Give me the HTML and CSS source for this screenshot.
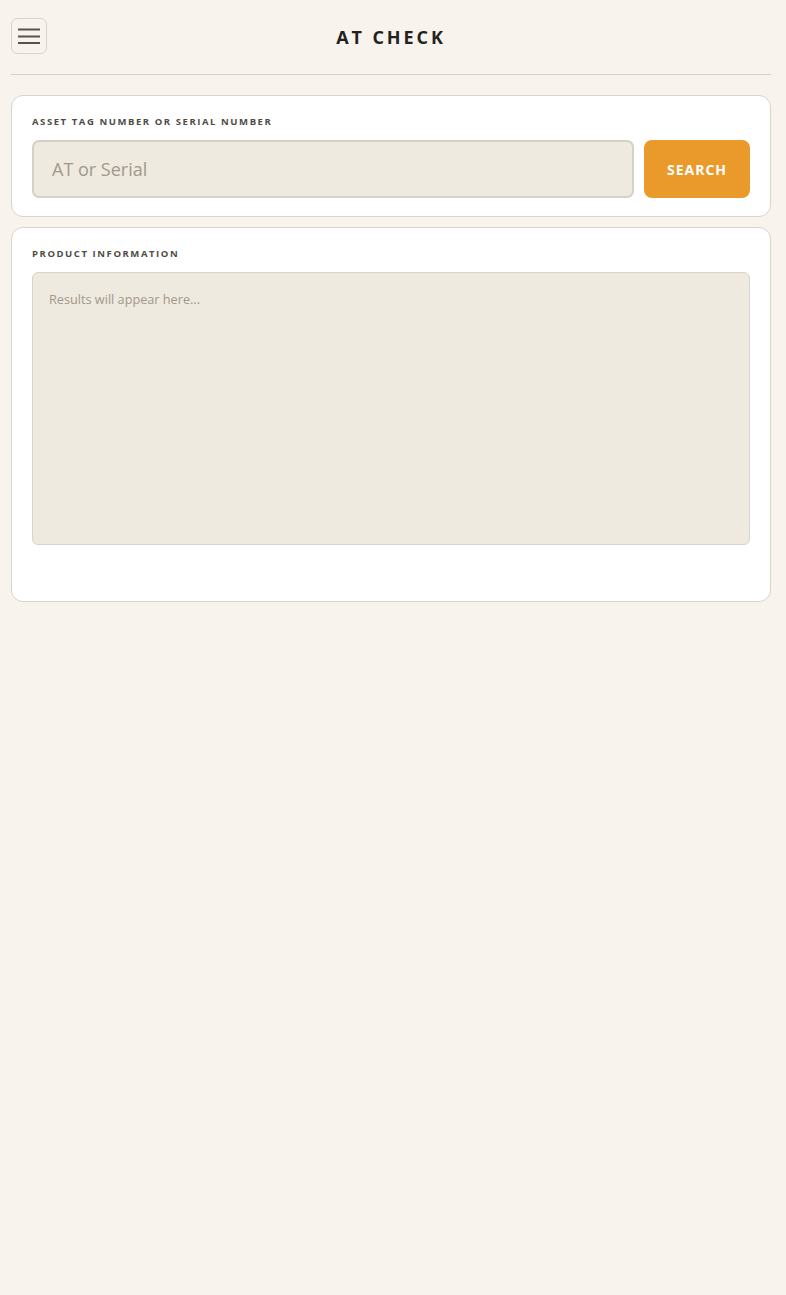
FILE: index.html
```html
<!DOCTYPE html>
<html lang="en">
<head>
<meta charset="utf-8">
<title>AT Check</title>
<link rel="stylesheet" href="styles.css">
</head>
<body>
<div class="page">
  <header class="header">
    <button class="menu-btn" aria-label="Menu">
      <svg width="22" height="16" viewBox="0 0 22 16"><path d="M0 1.5H22M0 8.5H22M0 15H22" stroke="#57534c" stroke-width="2"/></svg>
    </button>
    <h1 class="title">AT CHECK</h1>
    <span class="spacer"></span>
  </header>
  <section class="card">
    <div class="label">ASSET TAG NUMBER OR SERIAL NUMBER</div>
    <div class="search-row">
      <input class="input" type="text" placeholder="AT or Serial">
      <button class="search-btn">SEARCH</button>
    </div>
  </section>
  <section class="card card-info">
    <div class="label">PRODUCT INFORMATION</div>
    <div class="results">Results will appear here...</div>
  </section>
</div>
</body>
</html>
```
FILE: styles.css
```css
html, body { margin: 0; padding: 0; }
body {
  background: #f8f4ed;
  font-family: "Open Sans", "Noto Sans", sans-serif;
  color: #2a2824;
}
.page { padding: 18px 15px 0 11px; }
.header {
  display: flex;
  align-items: center;
  justify-content: space-between;
  padding-bottom: 20px;
  border-bottom: 1px solid #d9d1c2;
}
.menu-btn {
  width: 36px; height: 36px;
  box-sizing: border-box;
  border: 1px solid #dbd4c5;
  border-radius: 6px;
  background: #f8f4ed;
  display: flex; align-items: center; justify-content: center;
  padding: 0;
}
.menu-btn svg { display: block; }
.title {
  margin: 2px 0 0 0;
  font-size: 18px;
  font-weight: 700;
  letter-spacing: 2.9px;
  color: #24221f;
}
.spacer { width: 36px; }
.card {
  margin-top: 20px;
  background: #fff;
  border: 1px solid #d9d4c9;
  border-radius: 12px;
  padding: 20px 20px 18px 20px;
}
.card + .card { margin-top: 10px; }
.label {
  font-size: 9.5px;
  font-weight: 700;
  letter-spacing: 1.57px;
  color: #4f4b45;
  line-height: 12px;
  margin-bottom: 12px;
}
.search-row { display: flex; gap: 10px; }
.input {
  flex: 1;
  height: 58px;
  box-sizing: border-box;
  background: #efeae0;
  border: 2px solid #d6d1c6;
  border-radius: 7px;
  padding: 0 18px;
  font-family: inherit;
  font-size: 18px;
  color: #3a3630;
  outline: none;
}
.input::placeholder { color: #a2988a; }
.search-btn {
  width: 106px;
  height: 58px;
  border: none;
  border-radius: 8px;
  background: #e99a2a;
  color: #fff;
  font-family: inherit;
  font-size: 14px;
  font-weight: 700;
  letter-spacing: 1px;
}
.card-info { padding-bottom: 56px; }
.results {
  height: 273px;
  box-sizing: border-box;
  background: #efeae0;
  border: 1px solid #d9d4c9;
  border-radius: 6px;
  padding: 17px 16px;
  font-size: 12.7px;
  color: #a2988a;
}
```
